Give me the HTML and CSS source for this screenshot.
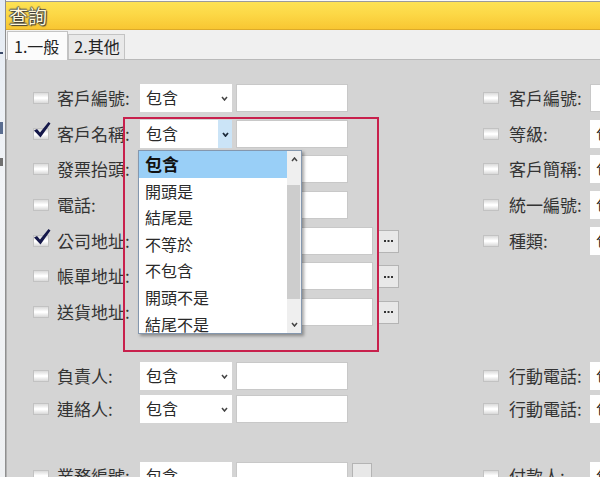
FILE: index.html
```html
<!DOCTYPE html>
<html lang="zh-Hant">
<head>
<meta charset="utf-8">
<title>查詢</title>
<link rel="stylesheet" href="styles.css">
</head>
<body>
<div class="window">
  <div class="strip"><span class="mark m1"></span><span class="mark m2"></span><span class="mark m3"></span></div>
  <div class="main">
    <div class="titlebar"><span class="title">查詢</span></div>
    <div class="tabs">
      <div class="tab active">1.一般</div>
      <div class="tab">2.其他</div>
    </div>
    <div class="panel">
      <div class="line">
        <div class="left"><span class="cb"></span><span class="lbl">客戶編號:</span><div class="sel">包含<svg class="chev" viewBox="0 0 7 5"><polyline points="1,1 3.5,4 6,1"/></svg></div><div class="inp"></div></div>
        <div class="right"><span class="cb"></span><span class="lbl">客戶編號:</span><div class="inp"></div></div>
      </div>
      <div class="line">
        <div class="left"><span class="cb checked"><svg class="tick" viewBox="0 0 18 18"><path d="M1 9.5 L4 8 L7 11.5 L15.5 1 L17.5 2.5 L7.5 16.5 Z"/></svg></span><span class="lbl">客戶名稱:</span><div class="sel open">包含<span class="arrowbtn"><svg class="chev" viewBox="0 0 7 5"><polyline points="1,1 3.5,4 6,1"/></svg></span></div><div class="inp"></div></div>
        <div class="right"><span class="cb"></span><span class="lbl">等級:</span><div class="sel">包含</div></div>
      </div>
      <div class="line">
        <div class="left"><span class="cb"></span><span class="lbl">發票抬頭:</span><div class="sel">包含</div><div class="inp"></div></div>
        <div class="right"><span class="cb"></span><span class="lbl">客戶簡稱:</span><div class="sel">包含</div></div>
      </div>
      <div class="line">
        <div class="left"><span class="cb"></span><span class="lbl">電話:</span><div class="sel">包含</div><div class="inp"></div></div>
        <div class="right"><span class="cb"></span><span class="lbl">統一編號:</span><div class="sel">包含</div></div>
      </div>
      <div class="line">
        <div class="left"><span class="cb checked"><svg class="tick" viewBox="0 0 18 18"><path d="M1 9.5 L4 8 L7 11.5 L15.5 1 L17.5 2.5 L7.5 16.5 Z"/></svg></span><span class="lbl">公司地址:</span><div class="sel">包含</div><div class="inp wide"></div><div class="btn"><svg class="dots" viewBox="0 0 9 2"><rect x="0" y="0" width="2" height="2"/><rect x="3.5" y="0" width="2" height="2"/><rect x="7" y="0" width="2" height="2"/></svg></div></div>
        <div class="right"><span class="cb"></span><span class="lbl">種類:</span><div class="sel">包含</div></div>
      </div>
      <div class="line">
        <div class="left"><span class="cb"></span><span class="lbl">帳單地址:</span><div class="sel">包含</div><div class="inp wide"></div><div class="btn"><svg class="dots" viewBox="0 0 9 2"><rect x="0" y="0" width="2" height="2"/><rect x="3.5" y="0" width="2" height="2"/><rect x="7" y="0" width="2" height="2"/></svg></div></div>
      </div>
      <div class="line group-end">
        <div class="left"><span class="cb"></span><span class="lbl">送貨地址:</span><div class="sel">包含</div><div class="inp wide"></div><div class="btn"><svg class="dots" viewBox="0 0 9 2"><rect x="0" y="0" width="2" height="2"/><rect x="3.5" y="0" width="2" height="2"/><rect x="7" y="0" width="2" height="2"/></svg></div></div>
      </div>
      <div class="line tight">
        <div class="left"><span class="cb"></span><span class="lbl">負責人:</span><div class="sel">包含<svg class="chev" viewBox="0 0 7 5"><polyline points="1,1 3.5,4 6,1"/></svg></div><div class="inp"></div></div>
        <div class="right"><span class="cb"></span><span class="lbl">行動電話:</span><div class="sel">包含</div></div>
      </div>
      <div class="line group-end2">
        <div class="left"><span class="cb"></span><span class="lbl">連絡人:</span><div class="sel">包含<svg class="chev" viewBox="0 0 7 5"><polyline points="1,1 3.5,4 6,1"/></svg></div><div class="inp"></div></div>
        <div class="right"><span class="cb"></span><span class="lbl">行動電話:</span><div class="sel">包含</div></div>
      </div>
      <div class="line">
        <div class="left"><span class="cb"></span><span class="lbl">業務編號:</span><div class="sel">包含</div><div class="inp"></div><div class="btn small"></div></div>
        <div class="right"><span class="cb"></span><span class="lbl">付款人:</span><div class="sel">包含</div></div>
      </div>

      <div class="highlight-box"></div>

      <div class="dropdown">
        <ul class="items">
          <li class="selected">包含</li>
          <li>開頭是</li>
          <li>結尾是</li>
          <li>不等於</li>
          <li>不包含</li>
          <li>開頭不是</li>
          <li>結尾不是</li>
        </ul>
        <div class="scrollbar">
          <svg class="sarrow up" viewBox="0 0 7 5"><polyline points="1,4 3.5,1 6,4"/></svg>
          <div class="thumb"></div>
          <svg class="sarrow down" viewBox="0 0 7 5"><polyline points="1,1 3.5,4 6,1"/></svg>
        </div>
      </div>
    </div>
  </div>
</div>
</body>
</html>
```

FILE: styles.css
```css
html, body {
  margin: 0;
  padding: 0;
}
body {
  width: 600px;
  height: 477px;
  overflow: hidden;
  background: #d4d4d4;
  font-family: "Noto Sans CJK TC", "Noto Sans", sans-serif;
  color: #2a2a2a;
}
.window {
  display: flex;
  height: 477px;
  overflow: hidden;
}
.strip {
  width: 5px;
  flex: none;
  background: linear-gradient(#e4ebf3, #f2f4f7 40%, #eef0f2);
  border-right: 1px solid #8f8f8f;
  position: relative;
}
.mark {
  position: absolute;
  left: 0;
  width: 3px;
  background: #3a4a6a;
}
.m1 { top: 52px; height: 2px; }
.m2 { top: 122px; height: 12px; background: #5a6d90; }
.m3 { top: 158px; height: 8px; background: #707070; }
.main {
  flex: 1;
  display: flex;
  flex-direction: column;
  min-width: 0;
  background: #fafafa;
  padding-top: 1px;
  overflow: hidden;
}
.titlebar {
  flex: none;
  height: 27px;
  border-top: 1px solid #9a9a9a;
  border-bottom: 1px solid #dcaa2a;
  background: linear-gradient(#fde254, #fcd846 45%, #f8c632);
  display: flex;
  align-items: center;
  padding-left: 3px;
}
.title {
  font-size: 19px;
  line-height: 22px;
  color: #fff8da;
  text-shadow: 0 0 1px #2a2a2a, 1px 1px 1px #3a3a3a, -1px 0 1px #5a5a5a, 0 -1px 1px #5a5a5a;
}
.tabs {
  flex: none;
  height: 29px;
  background: #f0f0f0;
  border-bottom: 1px solid #b9b9b9;
  display: flex;
  align-items: flex-end;
  padding-left: 1px;
}
.tab {
  font-size: 16px;
  line-height: 23px;
  padding: 0 4px 0 5px;
  border: 1px solid #c3c3c3;
  border-bottom: none;
  color: #222;
  background: #e9e9e9;
  height: 24px;
}
.tab.active {
  background: #fbfbfb;
  height: 28px;
  line-height: 29px;
  padding: 0 8px 0 6px;
  margin-bottom: -1px;
}
.panel {
  flex: 1;
  min-height: 0;
  background: #d4d4d4;
  border-left: 1px solid #b0b0b0;
  position: relative;
  padding: 24px 0 0 26px;
}
.line {
  display: flex;
  align-items: center;
  height: 28px;
  margin-bottom: 7.67px;
}
.line.group-end { margin-bottom: 36px; }
.line.tight { margin-bottom: 5px; }
.line.group-end2 { margin-bottom: 39px; }
.left {
  width: 450px;
  flex: none;
  display: flex;
  align-items: center;
}
.right {
  display: flex;
  align-items: center;
  flex: none;
}
.cb {
  width: 14px;
  height: 10px;
  flex: none;
  border: 1px solid #c2c2c2;
  background: linear-gradient(#dadada, #ffffff 45%, #ffffff 55%, #d8d8d8);
  position: relative;
}
.tick {
  position: absolute;
  left: -1px;
  top: -8px;
  width: 18px;
  height: 18px;
  fill: #15184a;
}
.lbl {
  font-size: 17px;
  line-height: 22px;
  color: #333;
  white-space: nowrap;
}
.left .lbl { margin-left: 8px; width: 83px; }
.right .lbl { margin-left: 10px; width: 81px; }
.sel {
  width: 86px;
  height: 28px;
  background: #fff;
  padding-left: 6px;
  font-size: 16px;
  line-height: 27px;
  color: #2a2a2a;
  position: relative;
  flex: none;
  overflow: hidden;
  white-space: nowrap;
}
.chev {
  position: absolute;
  right: 4px;
  top: 12px;
  width: 7px;
  height: 5px;
  fill: none;
  stroke: #444;
  stroke-width: 1.5;
}
.arrowbtn {
  position: absolute;
  right: 0;
  top: 0;
  width: 14px;
  height: 28px;
  background: #cbe4f7;
}
.arrowbtn .chev {
  right: 3px;
  stroke: #1c2a3a;
  stroke-width: 1.8;
}
.inp {
  width: 110px;
  height: 26px;
  margin-left: 4px;
  background: #fff;
  border: 1px solid #c8c8c8;
  flex: none;
}
.right .inp { margin-left: 0; width: 40px; }
.inp.wide { width: 135px; }
.btn {
  width: 19px;
  height: 21px;
  margin-left: 5px;
  border: 1px solid #b4b4b4;
  background: #e8e8e8;
  align-self: flex-start;
  margin-top: 3px;
  flex: none;
  display: flex;
  align-items: center;
  justify-content: center;
}
.dots {
  width: 9px;
  height: 2px;
  fill: #333;
}
.btn.small { margin-left: 4px; width: 18px; margin-top: 1px; }
.highlight-box {
  position: absolute;
  left: 116px;
  top: 57px;
  width: 256px;
  height: 235px;
  box-sizing: border-box;
  border: 2px solid #c8204c;
}
.dropdown {
  position: absolute;
  left: 131px;
  top: 90px;
  width: 162px;
  height: 182px;
  border: 1px solid #8497ae;
  background: #fff;
  box-shadow: 2px 2px 3px rgba(0, 0, 0, 0.35);
  display: flex;
}
.items {
  list-style: none;
  margin: 0;
  padding: 0;
  flex: 1;
}
.items li {
  height: 26.6px;
  line-height: 26px;
  font-size: 16px;
  padding-left: 6px;
  color: #2a2a2a;
}
.items li.selected {
  background: #99cff7;
  font-weight: bold;
  color: #111;
  font-size: 17px;
}
.scrollbar {
  width: 14px;
  background: #efefef;
  position: relative;
  flex: none;
}
.thumb {
  position: absolute;
  left: 0;
  right: 1px;
  top: 34px;
  height: 114px;
  background: #cdcdcd;
}
.sarrow {
  position: absolute;
  left: 4px;
  width: 7px;
  height: 5px;
  fill: none;
  stroke: #444;
  stroke-width: 1.5;
}
.sarrow.up { top: 6px; }
.sarrow.down { bottom: 6px; }
```
